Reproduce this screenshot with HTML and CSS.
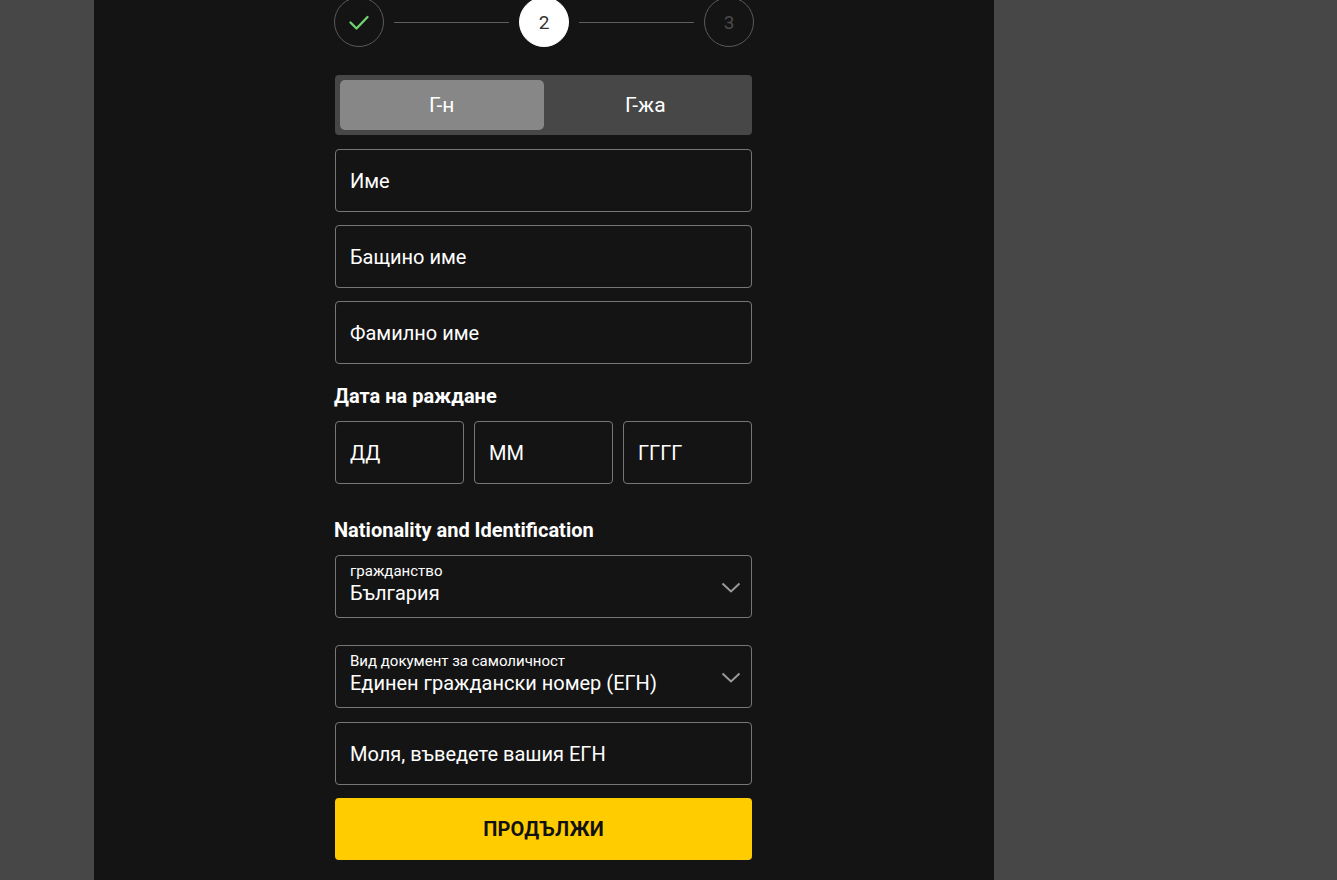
FILE: index.html
```html
<!DOCTYPE html>
<html lang="bg">
<head>
    <meta charset="UTF-8">
    <meta name="viewport" content="width=device-width, initial-scale=1.0">
    <title>Регистрация</title>
    <link rel="stylesheet" href="styles.css">
</head>
<body>
    <div class="page">
        <form class="form" action="#">
            <div class="stepper">
                <div class="step step-done">
                    <svg width="26" height="26" viewBox="0 0 26 26">
                        <path d="M4.5 13.5 L10.5 19.5 L21.5 8" fill="none" stroke="#6fd16f" stroke-width="2.4" stroke-linecap="round" stroke-linejoin="round"/>
                    </svg>
                </div>
                <div class="step-line"></div>
                <div class="step step-active">2</div>
                <div class="step-line"></div>
                <div class="step">3</div>
            </div>

            <div class="toggle">
                <button type="button" class="toggle-item active">Г-н</button>
                <button type="button" class="toggle-item">Г-жа</button>
            </div>

            <div class="field field-first"><span class="placeholder">Име</span></div>
            <div class="field"><span class="placeholder">Бащино име</span></div>
            <div class="field"><span class="placeholder">Фамилно име</span></div>

            <h3 class="section-title">Дата на раждане</h3>
            <div class="date-row">
                <div class="field date-day"><span class="placeholder">ДД</span></div>
                <div class="field date-month"><span class="placeholder">ММ</span></div>
                <div class="field date-year"><span class="placeholder">ГГГГ</span></div>
            </div>

            <h3 class="section-title section-gap">Nationality and Identification</h3>
            <div class="field select">
                <div class="select-text">
                    <span class="select-label">гражданство</span>
                    <span class="select-value">България</span>
                </div>
                <svg class="chevron" width="20" height="12" viewBox="0 0 20 12">
                    <path d="M1.5 1.5 L10 9.5 L18.5 1.5" fill="none" stroke="#9a9a9a" stroke-width="2"/>
                </svg>
            </div>
            <div class="field select select-gap">
                <div class="select-text">
                    <span class="select-label">Вид документ за самоличност</span>
                    <span class="select-value">Единен граждански номер (ЕГН)</span>
                </div>
                <svg class="chevron" width="20" height="12" viewBox="0 0 20 12">
                    <path d="M1.5 1.5 L10 9.5 L18.5 1.5" fill="none" stroke="#9a9a9a" stroke-width="2"/>
                </svg>
            </div>
            <div class="field field-egn"><span class="placeholder">Моля, въведете вашия ЕГН</span></div>

            <button type="submit" class="submit">ПРОДЪЛЖИ</button>
        </form>
    </div>
</body>
</html>
```

FILE: styles.css
```css
html, body {
    height: 100%;
}
body {
    margin: 0;
    padding: 0;
    background: #474747;
    font-family: Roboto, 'Noto Sans', sans-serif;
    color: white;
    overflow: hidden;
}
.page {
    width: 900px;
    box-sizing: border-box;
    min-height: 100%;
    margin-left: 94px;
    padding-left: 241px;
    background: #141414;
    display: flex;
}
.form {
    width: 417px;
    display: flex;
    flex-direction: column;
}
.stepper {
    display: flex;
    align-items: center;
    margin: -3px 0 0 -1px;
    width: 420px;
}
.step {
    width: 48px;
    height: 48px;
    border: 1px solid #5a5a5a;
    border-radius: 50%;
    display: flex;
    align-items: center;
    justify-content: center;
    font-size: 19px;
    color: #4a4a4a;
    flex-shrink: 0;
}
.step-done svg {
    margin-left: -1px;
}
.step-active {
    background: white;
    border-color: white;
    color: #333;
}
.step-line {
    flex: 1;
    height: 1px;
    background: #5e5e5e;
    margin: 0 10px;
}
.toggle {
    margin-top: 28px;
    height: 60px;
    box-sizing: border-box;
    padding: 5px;
    background: #474747;
    border-radius: 4px;
    display: flex;
}
.toggle-item {
    flex: 1;
    border: none;
    border-radius: 5px;
    background: transparent;
    color: white;
    font-family: inherit;
    font-size: 21px;
    cursor: pointer;
    padding: 0;
}
.toggle-item.active {
    background: #878787;
}
.field {
    height: 63px;
    box-sizing: border-box;
    border: 1px solid #777;
    border-radius: 4px;
    display: flex;
    align-items: center;
    padding: 0 14px;
    margin-top: 13px;
    font-size: 20px;
}
.field-first {
    margin-top: 14px;
}
.placeholder {
    color: white;
}
.section-title {
    margin: 20px 0 0 -1px;
    font-size: 20px;
    font-weight: 700;
    line-height: 24px;
}
.section-gap {
    margin-top: 34px;
}
.date-row {
    display: flex;
    gap: 10px;
    margin-top: 13px;
}
.date-row .field {
    margin-top: 0;
}
.date-day,
.date-year {
    width: 129px;
}
.date-month {
    width: 139px;
}
.select {
    justify-content: space-between;
    padding-right: 10px;
}
.select-gap {
    margin-top: 27px;
}
.select-text {
    display: flex;
    flex-direction: column;
    margin-top: -6px;
}
.select-label {
    font-size: 15px;
    line-height: 18px;
}
.select-value {
    font-size: 20px;
    line-height: 24px;
    margin-top: 1px;
}
.chevron {
    margin-top: 2px;
}
.field-egn {
    margin-top: 14px;
}
.submit {
    margin-top: 13px;
    height: 62px;
    border: none;
    border-radius: 4px;
    background: #ffcc00;
    color: #111;
    font-family: inherit;
    font-size: 20px;
    font-weight: 700;
    letter-spacing: 0.2px;
    cursor: pointer;
}
```
